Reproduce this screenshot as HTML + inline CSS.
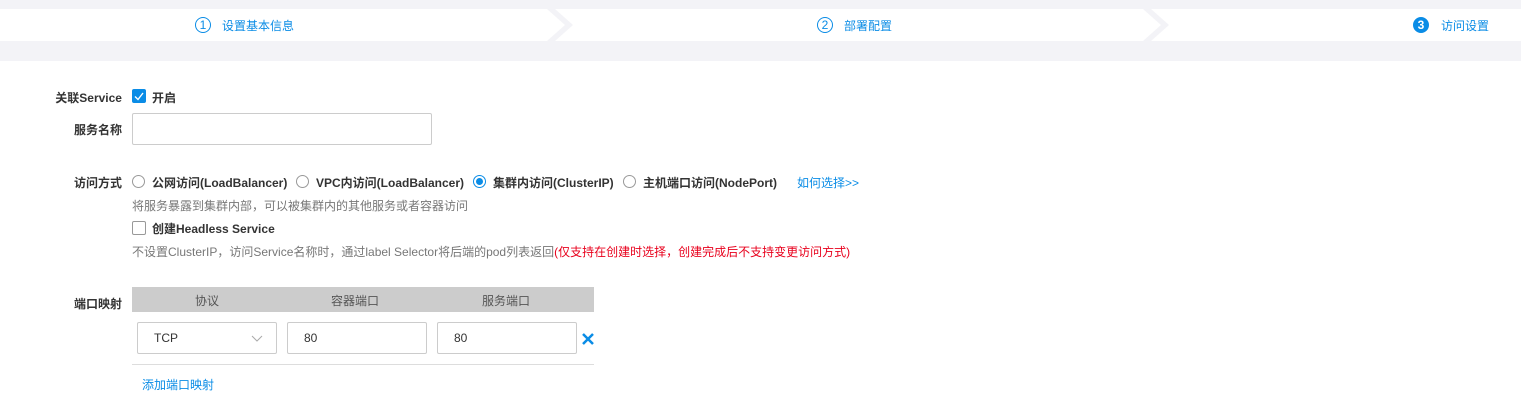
<!DOCTYPE html>
<html><head><meta charset="utf-8"><style>
*{margin:0;padding:0;box-sizing:border-box}
body{width:1521px;height:406px;background:#fff;font-family:"Liberation Sans","Noto Sans CJK SC",sans-serif;font-size:12px;color:#333;position:relative;overflow:hidden}
.a{position:absolute;white-space:nowrap}
.lbl{position:absolute;right:1399px;font-weight:bold;color:#333;white-space:nowrap}
.radio{position:absolute;width:13px;height:13px;border:1px solid #999;border-radius:50%;background:#fff}
.inp{position:absolute;border:1px solid #ccc;border-radius:2px;background:#fff;height:32px;padding-left:16px;line-height:30px;color:#333}
.blue{color:#0a8ce6}
.step{position:absolute;top:17px;height:16px;display:flex;align-items:center;font-size:12px;color:#0a8ce6;white-space:nowrap}
.num{display:block;flex:0 0 16px;width:16px;height:16px;border:1px solid #0a8ce6;border-radius:50%;text-align:center;line-height:14px;font-size:12px;margin-right:11px}
</style></head><body>
<div class="a" style="left:0;top:0;width:1521px;height:61px;background:#f3f3f7"></div>
<div class="a" style="left:0;top:9px;width:1521px;height:32px;background:#fff"></div>
<svg class="a" style="left:0;top:9px" width="1521" height="32">
<polygon points="547,0 555,0 573,16 555,32 547,32 565,16" fill="#f3f3f7"/>
<polygon points="1143,0 1151,0 1169,16 1151,32 1143,32 1161,16" fill="#f3f3f7"/>
</svg>
<div class="step" style="left:195px"><span class="num">1</span>设置基本信息</div>
<div class="step" style="left:817px"><span class="num">2</span>部署配置</div>
<div class="step" style="left:1413px"><span class="num" style="background:#0a8ce6;color:#fff;font-weight:bold;margin-right:12px">3</span>访问设置</div>

<div class="lbl" style="top:89px">关联Service</div>
<div class="a" style="left:132px;top:89px;width:14px;height:14px;background:#0a8ce6;border-radius:2px"><svg width="14" height="14"><path d="M3 7.5 L6 10.5 L11 4" stroke="#fff" stroke-width="1.4" fill="none"/></svg></div>
<div class="a" style="left:152px;top:89px;font-weight:bold">开启</div>

<div class="lbl" style="top:121px">服务名称</div>
<div class="inp" style="left:132px;top:113px;width:300px"></div>

<div class="lbl" style="top:174px">访问方式</div>
<div class="radio" style="left:132px;top:175px"></div>
<div class="a" style="left:152px;top:174px;font-weight:bold">公网访问(LoadBalancer)</div>
<div class="radio" style="left:296px;top:175px"></div>
<div class="a" style="left:316px;top:174px;font-weight:bold">VPC内访问(LoadBalancer)</div>
<div class="radio" style="left:473px;top:175px;border-color:#0a8ce6"><div style="position:absolute;left:2px;top:2px;width:7px;height:7px;border-radius:50%;background:#0a8ce6"></div></div>
<div class="a" style="left:493px;top:174px;font-weight:bold">集群内访问(ClusterIP)</div>
<div class="radio" style="left:623px;top:175px"></div>
<div class="a" style="left:643px;top:174px;font-weight:bold">主机端口访问(NodePort)</div>
<div class="a blue" style="left:797px;top:174px">如何选择&gt;&gt;</div>

<div class="a" style="left:132px;top:197px;color:#777">将服务暴露到集群内部，可以被集群内的其他服务或者容器访问</div>
<div class="a" style="left:132px;top:221px;width:14px;height:14px;border:1px solid #999;border-radius:2px"></div>
<div class="a" style="left:152px;top:220px;font-weight:bold">创建Headless Service</div>
<div class="a" style="left:132px;top:243px;color:#777">不设置ClusterIP，访问Service名称时，通过label Selector将后端的pod列表返回<span style="color:#e8001c">(仅支持在创建时选择，创建完成后不支持变更访问方式)</span></div>

<div class="lbl" style="top:295px">端口映射</div>
<div class="a" style="left:132px;top:287px;width:462px;height:25px;background:#ccc"></div>
<div class="a" style="left:195px;top:292px;color:#555">协议</div>
<div class="a" style="left:331px;top:292px;color:#555">容器端口</div>
<div class="a" style="left:482px;top:292px;color:#555">服务端口</div>
<div class="inp" style="left:137px;top:322px;width:140px">TCP<svg style="position:absolute;left:113px;top:12px" width="12" height="8"><path d="M1 1 L6 6 L11 1" stroke="#aaa" fill="none"/></svg></div>
<div class="inp" style="left:287px;top:322px;width:140px">80</div>
<div class="inp" style="left:437px;top:322px;width:140px">80</div>
<svg class="a" style="left:581px;top:332px" width="14" height="14"><path d="M2 2 L12 12 M12 2 L2 12" stroke="#0a8ce6" stroke-width="2.5"/></svg>
<div class="a" style="left:132px;top:364px;width:462px;height:1px;background:#ddd"></div>
<div class="a blue" style="left:142px;top:376px">添加端口映射</div>
</body></html>
